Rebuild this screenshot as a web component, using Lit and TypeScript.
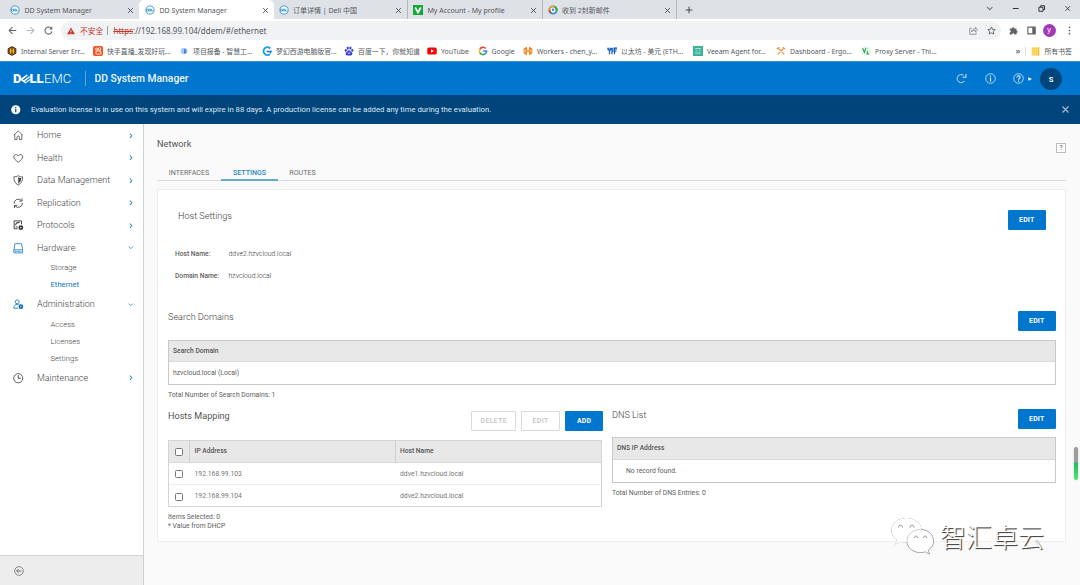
import { LitElement, html, svg, css, nothing, type TemplateResult } from "lit";
import { customElement, property } from "lit/decorators.js";

const dellRing = svg`<circle cx="6" cy="6" r="4.9" fill="#fff" stroke="#2a8fc9" stroke-width="1"/><path d="M1.8 4.9h2.4v2.4H1.8zM5 5h2v2.2H5zM7.6 4.8v2.4h2.6" fill="none" stroke="#2a8fc9" stroke-width=".9"/>`;

const ICONS: Record<string, TemplateResult> = {
  dell: dellRing,
  v: svg`<path d="M0 0h12v12H0z" fill="#12a83a"/><path d="M2.7 3l3.3 6 3.3-6" fill="none" stroke="#fff" stroke-width="2"/>`,
  mail: svg`<circle cx="6" cy="6" r="4.3" fill="#fff" stroke="#2d8be0" stroke-width="2.2"/><path d="M1.7 6A4.3 4.3 0 0 1 8 2.2" fill="none" stroke="#f0a51e" stroke-width="2.2"/><path d="M8 2.2A4.3 4.3 0 0 1 10 7.6" fill="none" stroke="#3da94a" stroke-width="2.2"/><path d="M1.7 6a4.3 4.3 0 0 0 2 3.6" fill="none" stroke="#e4472c" stroke-width="2.2"/><circle cx="6" cy="5.800" r="1.500" fill="#3b82d6"/>`,
  hex: svg`<path d="M6 .8l4.6 2.4v5.6L6 11.2 1.4 8.8V3.200z" fill="#8a5a12" stroke="#3a2a12" stroke-width="1.2"/><path d="M4.300 3v6M7.700 3v6M4.300 6h3.400" stroke="#f2b63a" stroke-width="1.2"/>`,
  kuai: svg`<rect width="12" height="12" rx="2.400" fill="#f4511e"/><circle cx="4.300" cy="3.700" r="1.300" fill="none" stroke="#fff"/><circle cx="7.800" cy="3.500" r="1.500" fill="none" stroke="#fff"/><rect x="3.500" y="6" width="6" height="3.800" rx="1" fill="none" stroke="#fff" stroke-width="1.100"/>`,
  dot: svg`<circle cx="6" cy="6" r="4" fill="#a9cbf5"/><path d="M6 3.200a3 3 0 0 1 0 6z" fill="#4a86d8"/>`,
  gcyan: svg`<path d="M10 3A4.700 4.700 0 1 0 9.500 9.800" fill="none" stroke="#1aa5e8" stroke-width="2.400"/><path d="M5.500 6.500h5.500L9.500 9" fill="none" stroke="#2c6fe0" stroke-width="1.700"/>`,
  paw: svg`<g fill="#3a40dc"><ellipse cx="2.200" cy="5.300" rx="1.300" ry="1.700"/><ellipse cx="4.500" cy="2.500" rx="1.300" ry="1.800"/><ellipse cx="7.700" cy="2.500" rx="1.300" ry="1.800"/><ellipse cx="10" cy="5.300" rx="1.300" ry="1.700"/><path d="M6 5c1.500 0 2 1.500 3.300 2.600 1.500 1.400.8 3.800-1 3.800H3.700c-1.800 0-2.500-2.400-1-3.800C4 6.500 4.500 5 6 5z"/></g><path d="M4.500 8.500h3" stroke="#fff"/>`,
  yt: svg`<rect x=".3" y="1.700" width="11.400" height="8.600" rx="2" fill="#f00"/><path d="M4.800 3.900l3.600 2.100-3.600 2.100z" fill="#fff"/>`,
  google: svg`<g fill="none" stroke-width="2"><path d="M9.300 3A4.300 4.300 0 0 0 2.100 4.200" stroke="#ea4335"/><path d="M2.100 4.200a4.300 4.300 0 0 0 0 3.600" stroke="#fbbc05"/><path d="M2.100 7.800A4.300 4.300 0 0 0 8.900 9.200" stroke="#34a853"/><path d="M8.900 9.200A4.300 4.300 0 0 0 10.300 6H6" stroke="#4285f4"/></g>`,
  work: svg`<path d="M4.800 1L.8 3v6l4 2zM7.200 1l4 2v6l-4 2z" fill="#f48120"/><path d="M2.600 4v4M9.400 4v4" stroke="#fff" stroke-width=".8"/><path d="M4.500 6h3" stroke="#f9ab41" stroke-width="3"/>`,
  yf: svg`<path d="M0 2h12v3H0z" fill="#7fb3ec"/><path d="M1 2.500l2 3.500 2-3.500M3 6v4M6 2.500v7.500M6 6h2M9 10V2.500h3M9 6h2.300" fill="none" stroke="#1e5fb8" stroke-width="1.500"/>`,
  veeam: svg`<path d="M0 0h12v12H0z" fill="#3bb39b"/><path d="M2.500 3h7M2.500 8.500h7M3 5.700h2M7 5.700h2" stroke="#c8efe5" stroke-width="1"/>`,
  ergo: svg`<path d="M2 10l7-7M10 10L3 3M1 3.500l3-2M8 1.500l3 2" fill="none" stroke="#f0984a" stroke-width="1.500"/>`,
  proxy: svg`<circle cx="6" cy="6" r="5.600" fill="#dff3e6"/><path d="M2 2.500l2 5 2-5M7.500 6v3.500h2.500" fill="none" stroke="#2b9d58" stroke-width="1.300"/>`,
  folder: svg`<path d="M1 .5h10v11H1z" fill="#fbd45c"/><path d="M9.500 .5h1.500v11H9.500z" fill="#f3c03c"/>`,
  back: svg`<path d="M11 6H1.500M6 1.500L1.500 6 6 10.500" fill="none" stroke="#5f6368" stroke-width="1.400"/>`,
  fwd: svg`<path d="M1 6h9.500M6 1.500L10.500 6 6 10.500" fill="none" stroke="#b5b8bb" stroke-width="1.400"/>`,
  reload: svg`<path d="M10.200 4A4.700 4.700 0 1 0 10.600 7" fill="none" stroke="#5f6368" stroke-width="1.400"/><path d="M11 .8v4H7z" fill="#5f6368"/>`,
  warn: svg`<path d="M6 .8L11.800 11H.2z" fill="#c5352b"/><path d="M6 4.200v3.500M6 8.600v1.300" stroke="#fff" stroke-width="1.100"/>`,
  share: svg`<path d="M3.500 3H1v8h8.500V8.500M3.500 8c.5-3 2-4.300 5-4.300V1.500L11.500 5 8.500 8V5.800C6 5.800 4.700 6.500 3.500 8z" fill="none" stroke="#777b80" stroke-width="1"/>`,
  star: svg`<path d="M6 1.200l1.500 3.300 3.500.4-2.600 2.400.7 3.500L6 9 2.900 10.800l.7-3.500L1 4.900l3.500-.4z" fill="none" stroke="#5f6368" stroke-width="1.200"/>`,
  puzzle: svg`<path d="M1 3.200h3a1.500 1.500 0 1 1 3 0h3v3a1.500 1.500 0 1 1 0 3v2H7.200a1.500 1.500 0 0 0-3 0H1V8.500a1.500 1.500 0 0 0 0-3z" fill="#5f6368"/>`,
  panel: svg`<path d="M1.200 1.500h9.600v9H1.200z" fill="none" stroke="#5f6368" stroke-width="1.500"/><path d="M7 1.500h4v9H7z" fill="#5f6368"/>`,
  more: svg`<g fill="#5f6368"><circle cx="6" cy="1.800" r="1.150"/><circle cx="6" cy="6" r="1.150"/><circle cx="6" cy="10.200" r="1.150"/></g>`,
  x: svg`<path d="M2 2l8 8M10 2l-8 8" fill="none" stroke="currentColor" stroke-width="1.600"/>`,
  plus: svg`<path d="M6 1v10M1 6h10" stroke="#45484c" stroke-width="1.500"/>`,
  down: svg`<path d="M1.500 3.500L6 8l4.500-4.500" fill="none" stroke="currentColor" stroke-width="1.900"/>`,
  right: svg`<path d="M4 1.500L8.500 6 4 10.500" fill="none" stroke="currentColor" stroke-width="2.200"/>`,
  min: svg`<path d="M1 6h10" stroke="#333" stroke-width="1.700"/>`,
  max: svg`<path d="M1.200 3.800h7v7h-7z" fill="none" stroke="#333" stroke-width="1.700"/><path d="M4 3.500V1.200h6.800V8H8.500" fill="none" stroke="#333" stroke-width="1.700"/>`,
  home: svg`<path d="M.8 6L6 1l5.200 5M2 5v6h2.600V8.300a1.400 1.400 0 0 1 2.800 0V11H10V5" fill="none" stroke="#4a4a4a" stroke-width=".9"/>`,
  heart: svg`<path d="M6 10.600C2.500 8 .9 6.300.9 4.300.9 1.500 4.600.9 6 3.400 7.400.9 11.100 1.500 11.100 4.300c0 2-1.600 3.700-5.100 6.300z" fill="none" stroke="#4a4a4a" stroke-width=".95"/>`,
  shield: svg`<path d="M6 .8c1.600 1 3.200 1.300 5 1.200 0 4.500-1.300 7.600-5 9.400C2.300 9.600 1 6.500 1 2c1.800.1 3.400-.2 5-1.200z" fill="none" stroke="#444" stroke-width=".9"/><path d="M6 2.600c1.100.6 2.200.9 3.500.9-.2 3-1.200 5-3.500 6.400z" fill="#444"/>`,
  repl: svg`<path d="M1.200 6.500A4.900 4.900 0 0 1 9.600 2.800M10.800 5.500A4.900 4.900 0 0 1 2.400 9.200M10.300 .5v3H7.300M1.700 11.500v-3h3" fill="none" stroke="#444" stroke-width="1"/>`,
  proto: svg`<path d="M9.700 5V1H1.300v9h4" fill="none" stroke="#444" stroke-width="1.100"/><path d="M3 6c0-2.800 2-3.300 4.500-3.300M3 8h2.500" fill="none" stroke="#444" stroke-width="1.200"/><circle cx="9" cy="8.800" r="1.800" fill="#fff" stroke="#333" stroke-width="1.900"/>`,
  drive: svg`<path d="M1 7.800L2.200.8h7.600L11 7.800v3.500H1zM1 7.800h10" fill="none" stroke="#2a86c8" stroke-width="1"/><path d="M2.500 9.500h7" stroke="#2a86c8" stroke-width="1.400" stroke-dasharray="1 .6"/>`,
  admin: svg`<circle cx="4.800" cy="3.200" r="2.200" fill="none" stroke="#2a86c8" stroke-width="1.100"/><path d="M6 10.500H.9c0-2.800 1.300-4.400 4-4.400.8 0 1.300.1 1.800.4" fill="none" stroke="#2a86c8" stroke-width="1.100"/><circle cx="9" cy="8.800" r="1.700" fill="#fff" stroke="#0c6dbd" stroke-width="2"/>`,
  clock: svg`<circle cx="6" cy="6" r="5.200" fill="none" stroke="#4a4a4a" stroke-width="1"/><path d="M6 2.500V6h3" fill="none" stroke="#4a4a4a" stroke-width="1.100"/>`,
  collapse: svg`<circle cx="6" cy="6" r="5.200" fill="none" stroke="#666" stroke-width=".9"/><path d="M9 6H3.200M5.400 3.700L3.100 6l2.300 2.300" fill="none" stroke="#666" stroke-width="1.100"/>`,
  refresh: svg`<path d="M8.300 2.600A4.400 4.400 0 1 0 9.300 8.600" fill="none" stroke="#d7e8f7" stroke-width="1"/><path d="M10.900 1v3.700H7.200" fill="none" stroke="#d7e8f7" stroke-width="1.100"/>`,
  infoRing: svg`<circle cx="6" cy="6" r="5.200" fill="none" stroke="#d7e8f7" stroke-width=".9"/><path d="M6 5v4.200M6 2.800v1.200" stroke="#d7e8f7" stroke-width="1.300"/>`,
  helpRing: svg`<circle cx="6" cy="6" r="5.200" fill="none" stroke="#d7e8f7" stroke-width=".9"/><path d="M4.300 4.900c0-2.300 3.500-2.200 3.500-.2C7.800 6 6 5.900 6 7.400M6 8.300v1.200" fill="none" stroke="#d7e8f7" stroke-width="1.200"/>`,
  tri: svg`<path d="M1 .5L12 6 1 11.500z" fill="#fff"/>`,
  info: svg`<circle cx="6" cy="6" r="5.800" fill="#fff"/><path d="M6 5v4.300M6 2.600v1.400" stroke="#00447c" stroke-width="1.500"/>`,
};

@customElement("ui-icon")
class UiIcon extends LitElement {
  @property() name = "";
  static styles = css`
    :host { display: block; flex: none; width: 10px; height: 10px; }
    svg { display: block; width: 100%; height: 100%; overflow: visible; }
  `;
  render() {
    return html`<svg viewBox="0 0 12 12">${ICONS[this.name] ?? nothing}</svg>`;
  }
}

@customElement("browser-chrome")
class BrowserChrome extends LitElement {
  static styles = css`
    :host { display: block; height: 61px; font-family: "Noto Sans", "Noto Sans CJK SC", sans-serif; font-size: 7px; color: #55585c; white-space: nowrap; background: #fff; }
    .strip { display: flex; height: 19px; background: #dee1e6; }
    .tab { display: flex; align-items: center; box-sizing: border-box; width: 134.500px; padding: 1px 5px 0 10px; }
    .tab:first-child { width: 139px; padding-right: 5px; }
    .tab ui-icon { width: 10px; height: 10px; margin-right: 4.500px; }
    .tab span { flex: 1; }
    .tab .close { width: 7px; height: 7px; margin: 0; color: #45484c; }
    .tab.active { background: #fff; border-radius: 5px 5px 0 0; padding-left: 6px; }
    .tab.line { border-right: 1px solid #b4b8bd; padding-left: 5px; }
    .new { width: 8px; height: 8px; margin: 6px 0 0 8px; }
    .win { display: flex; margin-left: auto; gap: 18.500px; padding: 4.500px 9px 0 0; }
    .win ui-icon { width: 7.500px; height: 7px; color: #444; }
    .win .chev { color: #777; }
    .bar { display: flex; align-items: center; height: 23px; padding-left: 8px; }
    .bar > .n { width: 9px; height: 9px; margin-right: 9px; }
    .omni { display: flex; align-items: center; box-sizing: border-box; width: 940px; height: 19.500px; margin-left: -1px; padding: 0 5.500px 0 6px; border-radius: 10px; background: #f0f2f3; font-size: 8px; }
    .warn { width: 8px; height: 8px; margin-right: 5px; }
    .unsafe { color: #c5352b; width: 23px; font-size: 7.800px; }
    .sep { width: 1px; height: 9px; margin: 0 5.500px 0 4px; background: #9aa0a6; }
    .scheme { color: #c5352b; text-decoration: line-through; }
    .url { flex: 1; }
    .omni .s { width: 9px; height: 9px; margin-left: 9px; }
    .bar > .r { width: 9px; height: 9px; margin-left: 9px; }
    .omni + .r { margin-left: 7.500px; }
    .bar > .p { margin-left: 7px; width: 13px; height: 13px; border-radius: 50%; background: #a23ab5; color: #fff; text-align: center; line-height: 11px; }
    .marks { display: flex; align-items: center; height: 18px; padding-left: 7px; font-size: 6.880px; color: #55585c; }
    .mark { display: flex; align-items: center; flex: none; }
    .mark ui-icon { width: 10px; height: 10px; margin-right: 4px; }
    .end { display: flex; align-items: center; margin-left: auto; padding-right: 8px; }
    .end b { font-size: 9px; font-weight: 500; line-height: 10px; }
    .end i { width: 1px; height: 9px; margin: 0 5px 0 5px; background: #ddd; }
    .end ui-icon { width: 9px; height: 9px; margin-right: 4px; }
  `;
  render() {
    const tabs: [string, string, string][] = [
      ["dell", "DD System Manager", ""],
      ["dell", "DD System Manager", "active"],
      ["dell", "订单详情 | Dell 中国", "line"],
      ["v", "My Account - My profile", "line"],
      ["mail", "收到 2封新邮件", "line"],
    ];
    const marks: [string, string, number][] = [
      ["hex", "Internal Server Err...", 86], ["kuai", "快手直播_发现好玩...", 86], ["dot", "项目报备 - 智慧工...", 83],
      ["gcyan", "梦幻西游电脑版官...", 82], ["paw", "百度一下，你就知道", 83], ["yt", "YouTube", 50.500],
      ["google", "Google", 45.500], ["work", "Workers - chen_y...", 84], ["yf", "以太坊 - 美元 (ETH...", 86],
      ["veeam", "Veeam Agent for...", 83], ["ergo", "Dashboard - Ergo...", 85], ["proxy", "Proxy Server - Thi...", 90],
    ];
    return html`
      <div class="strip">
        ${tabs.map(([ic, t, c]) => html`<div class="tab ${c}"><ui-icon name=${ic}></ui-icon><span>${t}</span><ui-icon class="close" name="x"></ui-icon></div>`)}
        <ui-icon class="new" name="plus"></ui-icon>
        <div class="win"><ui-icon class="chev" name="down"></ui-icon><ui-icon name="min"></ui-icon><ui-icon name="max"></ui-icon><ui-icon name="x"></ui-icon></div>
      </div>
      <div class="bar">
        <ui-icon class="n" name="back"></ui-icon><ui-icon class="n" name="fwd"></ui-icon><ui-icon class="n" name="reload"></ui-icon>
        <div class="omni"><ui-icon class="warn" name="warn"></ui-icon><span class="unsafe">不安全</span><i class="sep"></i><span class="url"><span class="scheme">https</span>://192.168.99.104/ddem/#/ethernet</span><ui-icon class="s" name="share"></ui-icon><ui-icon class="s" name="star"></ui-icon></div>
        <ui-icon class="r" name="puzzle"></ui-icon><ui-icon class="r" name="panel"></ui-icon><div class="p">y</div><ui-icon class="r" name="more"></ui-icon>
      </div>
      <div class="marks">
        ${marks.map(([ic, t, w]) => html`<div class="mark" style="width:${w}px"><ui-icon name=${ic}></ui-icon><span>${t}</span></div>`)}
        <div class="end"><b>»</b><i></i><ui-icon name="folder"></ui-icon><span>所有书签</span></div>
      </div>`;
  }
}

@customElement("side-nav")
class SideNav extends LitElement {
  static styles = css`
    :host { display: flex; flex-direction: column; box-sizing: border-box; width: 144px; border-right: 1px solid #cfcfcf; background: #fff; font-size: 9px; font-weight: 300; color: #444; }
    nav { flex: 1; }
    .row { display: flex; align-items: center; height: 22.500px; padding: 0 9.500px 0 13px; }
    .row ui-icon { width: 10.500px; height: 10.500px; }
    .row span { flex: 1; padding-left: 13.500px; }
    .row .chev { width: 5.500px; height: 5.500px; color: #2b8ccb; }
    .sub { height: 17px; line-height: 17px; padding-left: 50.500px; font-size: 7.700px; }
    .sub.on { color: #1173c1; font-weight: 400; }
    .foot { display: flex; align-items: center; box-sizing: border-box; height: 30px; padding-left: 13.500px; border-top: 1px solid #d4d4d4; background: #ededed; }
  `;
  render() {
    const items: [string, string, string[]?][] = [
      ["home", "Home"], ["heart", "Health"], ["shield", "Data Management"], ["repl", "Replication"], ["proto", "Protocols"],
      ["drive", "Hardware", ["Storage", "Ethernet"]], ["admin", "Administration", ["Access", "Licenses", "Settings"]], ["clock", "Maintenance"],
    ];
    return html`<nav>${items.map(([ic, t, subs]) => html`
      <div class="row"><ui-icon name=${ic}></ui-icon><span>${t}</span><ui-icon class="chev" name=${subs ? "down" : "right"}></ui-icon></div>
      ${subs?.map((s) => html`<div class="sub ${s === "Ethernet" ? "on" : ""}">${s}</div>`)}`)}</nav>
      <div class="foot"><ui-icon name="collapse"></ui-icon></div>`;
  }
}

@customElement("network-page")
class NetworkPage extends LitElement {
  static styles = css`
    :host { display: block; flex: 1; padding: 0 14px 0 13px; background: #fafafa; font-size: 6.800px; color: #606060; white-space: nowrap; }
    .title { display: flex; justify-content: space-between; height: 39px; }
    .title h1 { margin: 0; padding-top: 14px; font-size: 9.200px; font-weight: 400; line-height: 12px; color: #555; }
    .help { box-sizing: border-box; width: 10px; height: 10px; margin-top: 19px; border: 1px solid #bbb; font-size: 6.500px; line-height: 8px; text-align: center; color: #555; background: #fff; }
    .tabs { display: flex; height: 17px; border-bottom: 1px solid #dcdcdc; font-size: 7.100px; line-height: 20px; color: #6c6c6c; }
    .tabs span { box-sizing: border-box; height: 18px; text-align: center; }
    .tabs .a { width: 64px; }
    .tabs .b { width: 57px; border-bottom: 2px solid #65a9cb; color: #2d88c6; font-weight: 500; }
    .tabs .c { width: 49px; }
    .panel { box-sizing: border-box; height: 353px; margin-top: 8px; padding: 0 9px 0 10px; border: 1px solid #efefef; background: #fff; }
    .head { display: flex; justify-content: space-between; align-items: flex-start; }
    h2 { margin: 0; font-size: 9.100px; font-weight: 300; line-height: 12px; color: #3c3c3c; }
    .btn { box-sizing: border-box; width: 38.500px; height: 20px; border: 1px solid #0076ce; border-radius: 1px; background: #0076ce; color: #fff; font-size: 6.900px; font-weight: 700; line-height: 18px; text-align: center; letter-spacing: .2px; }
    .btn.off { background: #fff; border-color: #dadada; color: #c4c4c4; font-weight: 500; letter-spacing: .4px; }
    .btn.wide { width: 45px; }
    .host { height: 53px; padding: 20px 10px 0 10px; box-sizing: border-box; }
    .kv { display: flex; height: 22px; line-height: 22px; padding-left: 7px; }
    .kv b { width: 53.500px; font-weight: 500; font-size: 6.700px; color: #606060; }
    .kv span { font-weight: 300; font-size: 6.900px; color: #333; }
    .search { height: 28.500px; margin-top: 24px; }
    .table { border: 1px solid #c9c9c9; box-sizing: border-box; }
    .th { display: flex; height: 21.500px; line-height: 21px; padding-left: 4px; background: #e8e8e8; border-bottom: 1px solid #d9d9d9; box-sizing: border-box; font-weight: 500; font-size: 6.700px; color: #555; }
    .td { display: flex; height: 22px; line-height: 22px; padding-left: 4px; box-sizing: border-box; }
    .note { line-height: 9px; }
    .first { height: 18px; padding-top: 5.500px; }
    .cols { display: flex; gap: 8px; }
    .hosts { width: 436px; }
    .dns { flex: 1; }
    .hosts .head { height: 31px; padding-top: 1.500px; box-sizing: border-box; }
    .hosts h2 { font-weight: 400; color: #555; }
    .btns { display: flex; gap: 5px; padding-right: .7px; margin-top: .5px; }
    .hosts .table { width: 434px; height: 67px; border-color: #d4d4d4; }
    .hosts .th { height: 22px; padding: 0; }
    .hosts .td { height: 22.500px; padding: 0; border-bottom: 1px solid #eee; font-weight: 400; color: #777; }
    .hosts .td:last-child { border: 0; }
    .ck { display: flex; align-items: center; box-sizing: border-box; width: 21px; padding-left: 6px; }
    .ck i { box-sizing: border-box; width: 8px; height: 8px; border: 1px solid #777; border-radius: 1.500px; background: #fff; margin-top: 1px; }
    .ip { box-sizing: border-box; width: 206px; padding-left: 4.500px; }
    .hn { box-sizing: border-box; padding-left: 4px; }
    .th .ck, .th .ip { border-right: 1px solid #d0d0d0; }
    .hosts .note { padding-top: 6px; }
    .dns .head { height: 28px; }
    .dns .table { height: 46px; }
    .dns .th { height: 22.500px; }
    .dns .td { padding-left: 13px; }
    .dns .note { padding-top: 6px; }
  `;
  render() {
    const rows = [["192.168.99.103", "ddve1.hzvcloud.local"], ["192.168.99.104", "ddve2.hzvcloud.local"]];
    return html`
      <div class="title"><h1>Network</h1><div class="help">?</div></div>
      <div class="tabs"><span class="a">INTERFACES</span><span class="b">SETTINGS</span><span class="c">ROUTES</span></div>
      <div class="panel">
        <div class="head host"><h2>Host Settings</h2><div class="btn">EDIT</div></div>
        <div class="kv"><b>Host Name:</b><span>ddve2.hzvcloud.local</span></div>
        <div class="kv"><b>Domain Name:</b><span>hzvcloud.local</span></div>
        <div class="head search"><h2>Search Domains</h2><div class="btn">EDIT</div></div>
        <div class="table"><div class="th">Search Domain</div><div class="td">hzvcloud.local (Local)</div></div>
        <div class="note first">Total Number of Search Domains: 1</div>
        <div class="cols">
          <section class="hosts">
            <div class="head"><h2>Hosts Mapping</h2><div class="btns"><div class="btn off wide">DELETE</div><div class="btn off">EDIT</div><div class="btn">ADD</div></div></div>
            <div class="table">
              <div class="th"><div class="ck"><i></i></div><div class="ip">IP Address</div><div class="hn">Host Name</div></div>
              ${rows.map(([a, b]) => html`<div class="td"><div class="ck"><i></i></div><div class="ip">${a}</div><div class="hn">${b}</div></div>`)}
            </div>
            <div class="note">Items Selected: 0<br />* Value from DHCP</div>
          </section>
          <section class="dns">
            <div class="head"><h2>DNS List</h2><div class="btn">EDIT</div></div>
            <div class="table"><div class="th">DNS IP Address</div><div class="td">No record found.</div></div>
            <div class="note">Total Number of DNS Entries: 0</div>
          </section>
        </div>
      </div>`;
  }
}

@customElement("app-root")
class AppRoot extends LitElement {
  static styles = css`
    :host { display: flex; flex-direction: column; position: relative; width: 1080px; height: 585px; overflow: hidden; font-family: Roboto, sans-serif; background: #fafafa; }
    header { display: flex; align-items: center; box-sizing: border-box; height: 34px; padding: 0 18px 0 13px; background: #0076ce; color: #fff; border-top: 1px solid #3a8fd0; }
    .logo { display: flex; align-items: center; width: 72px; height: 15px; border-right: 1px solid #5ba6de; font-size: 13px; line-height: 15px; }
    .logo b { font-weight: 900; }
    .logo .e { display: block; width: 10px; height: 10px; margin: 0 -1px; }
    .logo span { font-weight: 300; margin-left: .5px; }
    .name { flex: 1; padding-left: 8.500px; font-size: 10.300px; font-weight: 500; color: #eef6fc; }
    .icons { display: flex; align-items: center; }
    .icons ui-icon { width: 11px; height: 11px; margin-right: 17.500px; }
    .icons .h { margin-right: 4px; }
    .icons .tri { width: 4px; height: 4px; margin-right: 8px; }
    .user { width: 22px; height: 22px; border-radius: 50%; background: #00447c; font-size: 7.500px; font-weight: 700; line-height: 23px; text-align: center; }
    .banner { display: flex; align-items: center; height: 29px; padding: 0 11px; background: #00447c; color: #dce8f2; font-size: 7.720px; font-weight: 400; white-space: nowrap; }
    .banner ui-icon { width: 9.500px; height: 9.500px; }
    .banner span { flex: 1; padding-left: 10.500px; }
    .banner .x { width: 9px; height: 9px; color: #9fb8cd; margin-right: -1px; }
    .body { display: flex; flex: 1; min-height: 0; }
    .scroll { position: absolute; right: 2px; top: 447px; width: 4px; height: 33px; border-radius: 2px; background: linear-gradient(#9c9c9c 15px, #1fbf55 16px, #4fe07a); box-shadow: 0 0 3px #ddd; }
    .mark { position: absolute; left: 890px; top: 515px; display: flex; align-items: center; color: #fff; }
    .mark svg { width: 46px; height: 40px; overflow: visible; filter: drop-shadow(.5px .8px .4px #666); }
    .mark span { margin-left: 4px; font: 300 26px/41px "Noto Sans CJK SC", sans-serif; text-shadow: 1px 1px 1px #444, .7px 1px 0 #777; }
  `;
  render() {
    return html`
      <browser-chrome></browser-chrome>
      <header>
        <div class="logo"><b>D</b><svg class="e" viewBox="0 0 12 12"><path d="M0 6.500L8 .5l1.500 1.200-6.300 4.800L4.500 7.600 11 2.700l1.300 1-6.500 5 1 .8 6-4.500v2L6.500 11.500z" fill="#fff"/></svg><b>LL</b><span>EMC</span></div>
        <div class="name">DD System Manager</div>
        <div class="icons"><ui-icon name="refresh"></ui-icon><ui-icon name="infoRing"></ui-icon><ui-icon class="h" name="helpRing"></ui-icon><ui-icon class="tri" name="tri"></ui-icon><div class="user">S</div></div>
      </header>
      <div class="banner"><ui-icon name="info"></ui-icon><span>Evaluation license is in use on this system and will expire in 88 days. A production license can be added any time during the evaluation.</span><ui-icon class="x" name="x"></ui-icon></div>
      <div class="body"><side-nav></side-nav><network-page></network-page></div>
      <div class="scroll"></div>
      <div class="mark">
        <svg viewBox="0 0 46 40"><path d="M16.500 2C7.800 2 1.300 7.500 1.300 14.500c0 4 2.200 7.200 5.500 9.500l-1.500 4.500 5.300-2.700c2 .6 3.700.9 5.900.9 8.500 0 15.200-5.500 15.200-12.200S25 2 16.500 2z" fill="#fff"/><path d="M30.500 13.500c-7.500 0-13.500 5-13.500 11.500s6 11.500 13.500 11.500c1.600 0 3.200-.3 4.700-.8l4.200 2.300-1.100-3.800c3.300-2.300 5.200-5.400 5.200-9.200 0-6.500-5.800-11.500-13-11.500z" fill="#fff" stroke="#999" stroke-width=".5"/><g fill="none" stroke="#888" stroke-width="1"><path d="M8.500 11.500c0-3 4-3 4 0M20 11.500c0-3 4-3 4 0M24.500 22c0-2.500 3.300-2.500 3.300 0M33.500 22c0-2.500 3.300-2.500 3.300 0"/></g></svg>
        <span>智汇卓云</span>
      </div>`;
  }
}
